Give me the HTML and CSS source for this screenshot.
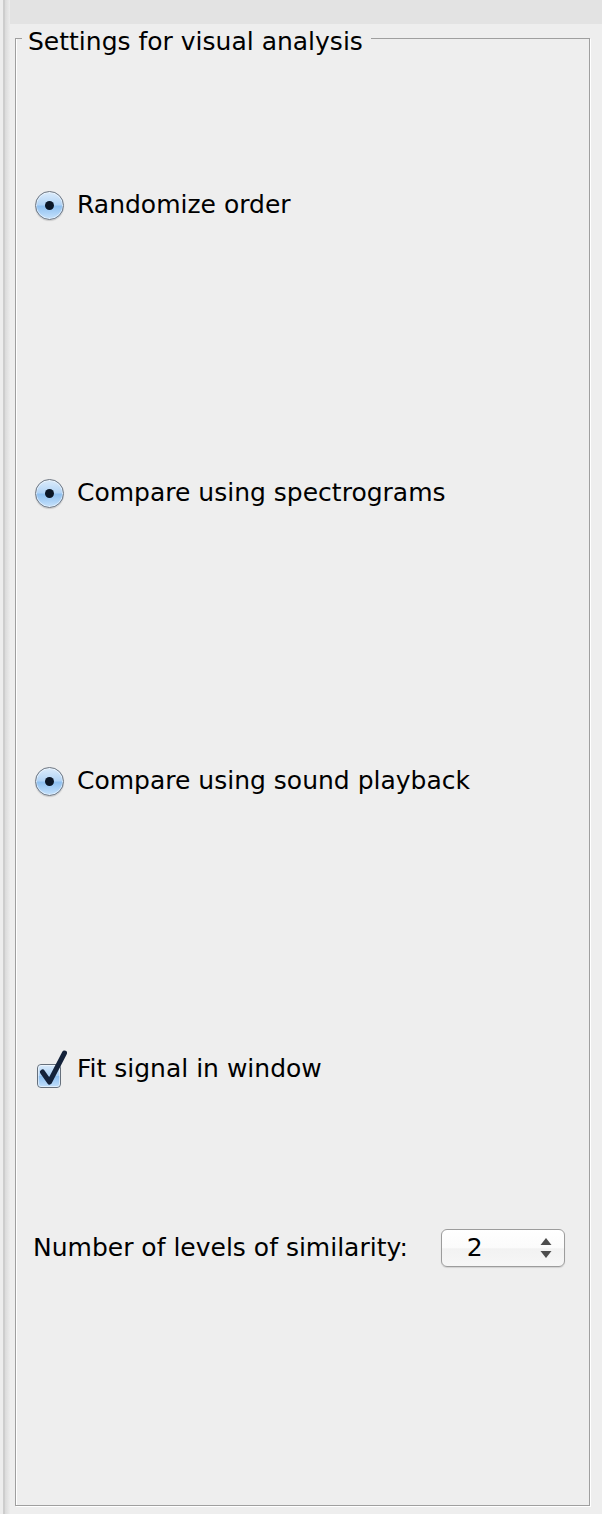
FILE: index.html
```html
<!DOCTYPE html>
<html>
<head>
<meta charset="utf-8">
<link rel="stylesheet" href="styles.css">
</head>
<body>
<div class="window">
  <div class="edge"></div>
  <div class="main">
    <div class="topbar"></div>
    <div class="panel">
      <fieldset class="group">
        <legend class="group-title">Settings for visual analysis</legend>
        <div class="options">
          <div class="slot">
            <label class="option"><span class="radio"><span class="radio-dot"></span></span><span class="option-text">Randomize order</span></label>
          </div>
          <div class="slot">
            <label class="option"><span class="radio"><span class="radio-dot"></span></span><span class="option-text">Compare using spectrograms</span></label>
          </div>
          <div class="slot">
            <label class="option"><span class="radio"><span class="radio-dot"></span></span><span class="option-text">Compare using sound playback</span></label>
          </div>
          <div class="slot">
            <label class="option">
              <svg class="checkbox" width="32" height="40" viewBox="0 0 32 40">
                <defs>
                  <linearGradient id="cbg" x1="0" y1="0" x2="0" y2="1">
                    <stop offset="0" stop-color="#dcecfb"/>
                    <stop offset="0.48" stop-color="#abd0f5"/>
                    <stop offset="0.52" stop-color="#8ebff0"/>
                    <stop offset="1" stop-color="#c3e0fb"/>
                  </linearGradient>
                </defs>
                <rect x="2.5" y="15.5" width="23" height="23" rx="3.5" fill="url(#cbg)" stroke="#66707c" stroke-width="1"/>
                <rect x="3.5" y="16.5" width="21" height="21" rx="2.5" fill="none" stroke="rgba(255,255,255,0.5)" stroke-width="1"/>
                <path d="M7.5 23 L14.5 33 L29.5 4" fill="none" stroke="#14223a" stroke-width="5" stroke-linecap="round" stroke-linejoin="round"/>
              </svg>
              <span class="option-text">Fit signal in window</span>
            </label>
          </div>
          <div class="spinner-row">
            <span class="spinner-label">Number of levels of similarity:</span>
            <div class="spinner">
              <span class="spinner-value">2</span>
              <svg class="spinner-arrows" width="14" height="22" viewBox="0 0 14 22">
                <path d="M7 1 L12.5 8 L1.5 8 Z" fill="#4d4d4d"/>
                <path d="M7 21 L12.5 14 L1.5 14 Z" fill="#4d4d4d"/>
              </svg>
            </div>
          </div>
        </div>
      </fieldset>
    </div>
  </div>
</div>
</body>
</html>
```
FILE: styles.css
```css
html, body {
  margin: 0;
  padding: 0;
}
body {
  background: #eeeeee;
  font-family: "DejaVu Sans", "Liberation Sans", sans-serif;
  font-size: 25px;
  color: #000;
}
.window {
  display: flex;
  width: 602px;
  height: 1514px;
  overflow: hidden;
}
.edge {
  width: 10px;
  flex: none;
  background: linear-gradient(to right, #ededed 0, #ededed 3px, #cdcdcd 3px, #cdcdcd 5px, #dadada 5px, #ececec 10px);
}
.main {
  flex: 1;
  display: flex;
  flex-direction: column;
}
.topbar {
  height: 24px;
  flex: none;
  background: #e3e3e3;
}
.panel {
  flex: 1;
  display: flex;
  flex-direction: column;
  padding: 0 12px 8px 5px;
  background: #eeeeee;
}
.group {
  flex: 1;
  margin: 0;
  padding: 0;
  min-width: 0;
  border: 1px solid #9f9f9f;
  box-shadow: inset 1px 0 0 #ffffff, 1px 1px 0 #ffffff;
}
.group-title {
  margin-left: 6px;
  padding: 7px 8px 0 6px;
  line-height: 22px;
  font-size: 25px;
}
.options {
  display: flex;
  flex-direction: column;
  padding-top: 8px;
}
.slot {
  height: 288px;
  display: flex;
  align-items: center;
  padding-left: 19px;
}
.option {
  display: flex;
  align-items: center;
  gap: 13px;
}
.option-text {
  line-height: 30px;
}
.radio {
  width: 29px;
  height: 29px;
  box-sizing: border-box;
  border-radius: 50%;
  border: 1px solid #6c7581;
  background: linear-gradient(#dcecfb 0%, #b2d4f6 47%, #8fc0f0 53%, #c6e2fc 100%);
  box-shadow: inset 0 0 0 1px rgba(255,255,255,0.5), 0 1px 1px rgba(0,0,0,0.15);
  display: flex;
  align-items: center;
  justify-content: center;
}
.radio-dot {
  width: 9px;
  height: 9px;
  border-radius: 50%;
  background: #0b1626;
}
.checkbox {
  display: block;
  margin-right: -3px;
}
.spinner-row {
  margin-top: 16px;
  display: flex;
  align-items: center;
  padding-left: 17px;
}
.spinner-label {
  line-height: 30px;
}
.spinner {
  margin-left: 33px;
  width: 124px;
  height: 38px;
  box-sizing: border-box;
  border: 1px solid #9c9c9c;
  border-radius: 6px;
  background: linear-gradient(#ffffff 0%, #fbfbfb 50%, #f2f2f2 52%, #f6f6f6 100%);
  box-shadow: 0 1px 1px rgba(0,0,0,0.12);
  display: flex;
  align-items: center;
  justify-content: space-between;
  padding: 0 11px 0 25px;
}
.spinner-value {
  line-height: 30px;
}
.spinner-arrows {
  display: block;
}
```
